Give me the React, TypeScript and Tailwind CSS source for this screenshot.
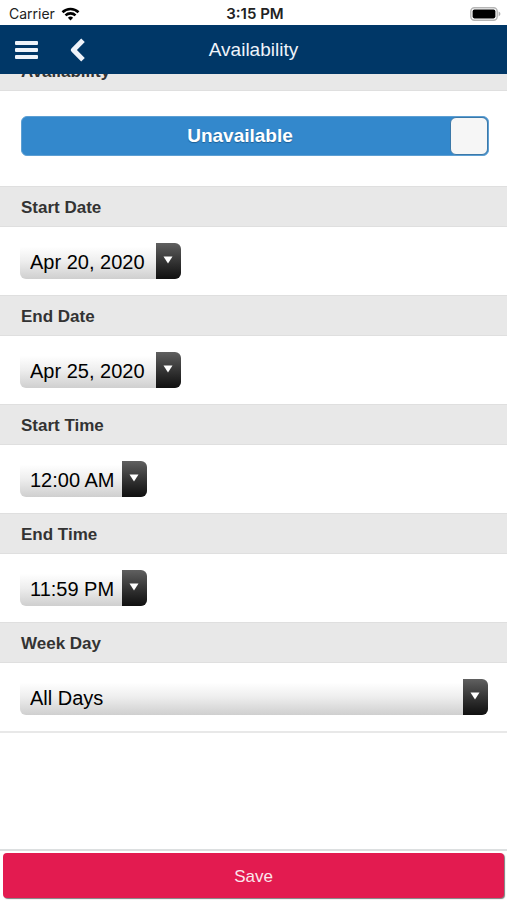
import { useState } from 'react';

interface PickerFieldProps {
  id: string;
  label: string;
  options: string[];
  widthClass: string;
}

function SectionHeading({ htmlFor, label }: { htmlFor: string; label: string }) {
  return (
    <label
      htmlFor={htmlFor}
      className="flex h-[41px] items-center border-t border-b border-[#dfdfdf] bg-[#e8e8e8] px-[21px] pt-0.5 text-[17px] leading-5 font-bold text-[#333]"
    >
      {label}
    </label>
  );
}

function PickerField({ id, label, options, widthClass }: PickerFieldProps) {
  return (
    <div>
      <SectionHeading htmlFor={id} label={label} />
      <div className="py-4 pr-[19px] pl-5">
        <div className={`relative h-9 max-w-full ${widthClass}`}>
          <select
            id={id}
            className="h-9 w-full appearance-none rounded-md bg-linear-to-b from-white from-10% via-[#eeeeee] via-50% to-[#cfcfcf] pt-0.5 pr-7 pl-[10px] text-xl text-black"
          >
            {options.map((option) => (
              <option key={option}>{option}</option>
            ))}
          </select>
          {/* Arrow cap */}
          <span className="pointer-events-none absolute inset-y-0 right-0 flex w-[25px] justify-center rounded-r-md bg-linear-to-b from-[#606060] to-[#101010] pt-[13px] pr-0.5">
            <svg width="10" height="8" viewBox="0 0 10 8" aria-hidden="true">
              <path d="M0.5 0.5h9L5 7.6z" fill="#fff" />
            </svg>
          </span>
        </div>
      </div>
    </div>
  );
}

function StatusBar() {
  return (
    <div className="grid h-[25px] shrink-0 grid-cols-3 items-center bg-white pt-0.5 pr-[6px] pl-[9px] font-[Inter,sans-serif] text-sm leading-5 text-[#222]">
      <div className="flex items-center gap-[6px]">
        <span>Carrier</span>
        <svg width="19" height="14" viewBox="0 0 18 14" fill="none" stroke="#000" strokeWidth="2.6" aria-hidden="true">
          <path d="M1 5.2a11.6 11.6 0 0 1 16 0" />
          <path d="M4 8.4a7.2 7.2 0 0 1 10 0" />
          <path d="M9 13.4 6.4 10.8a3.8 3.8 0 0 1 5.2 0z" fill="#000" stroke="none" />
        </svg>
      </div>
      <span className="text-center text-[15px] font-semibold">3:15 PM</span>
      <div className="flex justify-end">
        <svg width="31" height="14" viewBox="0 0 31 14" aria-hidden="true">
          <rect x="0.8" y="0.8" width="26.4" height="12.4" rx="3.6" fill="#fff" stroke="#b5b5b5" strokeWidth="1.4" />
          <rect x="2.6" y="2.6" width="22.8" height="8.8" rx="1.8" fill="#000" />
          <path d="M28.6 4.6c2.4 1 2.4 3.8 0 4.8z" fill="#b0b0b0" />
        </svg>
      </div>
    </div>
  );
}

export default function App() {
  const [unavailable, setUnavailable] = useState(true);

  return (
    <div className="flex h-screen flex-col overflow-hidden bg-white font-['Liberation_Sans',Arial,sans-serif]">
      <StatusBar />

      <header className="grid h-[49px] shrink-0 grid-cols-[1fr_auto_1fr] items-center bg-[#003767] text-[#eef3fa]">
        <div className="flex items-center gap-8 pl-[15px]">
          <button type="button" aria-label="Menu">
            <svg width="23" height="20" viewBox="0 0 23 20" fill="currentColor" aria-hidden="true">
              <rect y="1" width="23" height="4" rx="1" />
              <rect y="8" width="23" height="4" rx="1" />
              <rect y="15" width="23" height="4" rx="1" />
            </svg>
          </button>
          <button type="button" aria-label="Back">
            <svg width="16" height="24" viewBox="0 0 16 24" fill="none" stroke="currentColor" strokeWidth="5" strokeLinejoin="round" aria-hidden="true">
              <path d="M13 2.2 3.4 12l9.6 9.8" />
            </svg>
          </button>
        </div>
        <h1 className="text-[19px] leading-6">Availability</h1>
      </header>

      <main className="min-h-0 flex-1 overflow-hidden">
        {/* First heading is scrolled partly under the header */}
        <div className="-mt-6">
          <SectionHeading htmlFor="availability" label="Availability" />
          <div className="pt-[25px] pr-[18px] pb-[30px] pl-[21px]">
            <button
              id="availability"
              type="button"
              role="switch"
              aria-checked={unavailable}
              onClick={() => setUnavailable(!unavailable)}
              className="flex h-10 w-full items-stretch rounded-md border border-[#5d9fd3] bg-[#3388cc] text-[19px] font-bold text-white"
            >
              <span className="flex flex-1 items-center justify-center pl-2 text-shadow-[0_1px_1px_#1d5f95]">
                {unavailable ? 'Unavailable' : 'Available'}
              </span>
              <span className="w-[38px] rounded-md border border-[#3b78a8] bg-[#f6f6f6]" />
            </button>
          </div>

          <PickerField id="start-date" label="Start Date" options={['Apr 20, 2020']} widthClass="w-[161px]" />
          <PickerField id="end-date" label="End Date" options={['Apr 25, 2020']} widthClass="w-[161px]" />
          <PickerField id="start-time" label="Start Time" options={['12:00 AM']} widthClass="w-[127px]" />
          <PickerField id="end-time" label="End Time" options={['11:59 PM']} widthClass="w-[127px]" />
          <PickerField id="week-day" label="Week Day" options={['All Days']} widthClass="w-full" />
          <div className="h-0.5 bg-[#e8e8e8]" />
        </div>
      </main>

      <footer className="shrink-0 border-t-2 border-[#dcdfe0] px-[3px] pt-0.5 pb-0.5">
        <button
          type="button"
          className="h-[45px] w-full rounded-sm bg-[#e31b50] pt-0.5 text-[17px] text-[#fbe6ec] shadow-[1px_1px_1px_#7d7d7d]"
        >
          Save
        </button>
      </footer>
    </div>
  );
}
